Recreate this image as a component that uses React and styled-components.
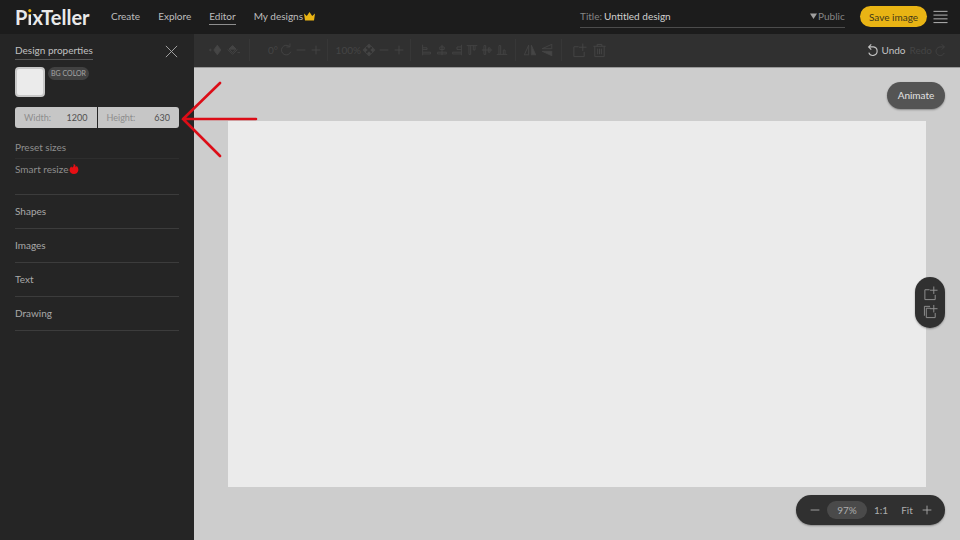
import React from "react";
import styled, { createGlobalStyle } from "styled-components";

const GlobalStyle = createGlobalStyle`
  * { box-sizing: border-box; }
  html, body, #root { height: 100%; }
  body {
    margin: 0;
    background: #cdcdcd;
    color: #bdbdbd;
    font: 10px/14px Lato, "Open Sans", sans-serif;
  }
  button, input, select { font: inherit; color: inherit; }
  button { border: 0; padding: 0; background: none; cursor: pointer; }
  a { color: inherit; text-decoration: none; }
`;

const Page = styled.div`
  position: relative;
  display: flex;
  flex-direction: column;
  min-height: 100vh;
`;

const Header = styled.header`
  display: flex;
  align-items: center;
  height: 34px;
  padding: 0 12px 1px 15px;
  background: #1c1c1c;
`;

const Logo = styled.a`
  flex: 0 0 96px;
  color: #e9e9e9;
  font-size: 20px;
  font-weight: 700;
  line-height: 26px;
`;

const LogoDot = styled.span`
  color: transparent;
  background: linear-gradient(#e9b411 40%, #e9e9e9 40%);
  background-clip: text;
`;

const Nav = styled.nav`
  display: flex;
  gap: 18px;
`;

const NavLink = styled.a`
  display: flex;
  align-items: center;
  gap: 1px;
  height: 17px;
  border-bottom: 1px solid ${(p) => (p.$active ? "#8d8d8d" : "transparent")};
`;

const TitleBar = styled.div`
  display: flex;
  align-items: center;
  flex: 0 1 265px;
  height: 22px;
  margin: 0 15px 0 auto;
  border-bottom: 1px solid #4c4c4c;
  color: #858585;
`;

const TitleLabel = styled.label`
  display: flex;
  flex: 1;
  gap: 2px;
`;

const TitleInput = styled.input`
  flex: 1;
  min-width: 0;
  padding: 0;
  border: 0;
  background: none;
  color: #d0d0d0;
`;

const Visibility = styled.div`
  display: flex;
  align-items: center;
  gap: 1px;
`;

const VisibilitySelect = styled.select`
  appearance: none;
  padding: 0;
  border: 0;
  background: none;
`;

const SaveButton = styled.button`
  width: 67px;
  height: 21px;
  margin-right: 6px;
  border-radius: 11px;
  background: #e9b414;
  color: #433819;
`;

const Body = styled.div`
  display: flex;
  flex: 1;
`;

const Sidebar = styled.aside`
  flex: 0 0 194px;
  padding: 8px 15px;
  background: #252525;
`;

const PanelHead = styled.div`
  display: flex;
  align-items: center;
  justify-content: space-between;
  height: 18px;
  color: #a8a8a8;
`;

const PanelTitle = styled.h2`
  height: 17px;
  margin: 0;
  border-bottom: 1px solid #585858;
  color: #c0c0c0;
  font-size: 10px;
  font-weight: 400;
  line-height: 14px;
`;

const IconButton = styled.button`
  display: grid;
  place-items: center;
  flex: 0 0 ${(p) => p.$w || 15}px;
  height: 16px;
`;

const ColorRow = styled.div`
  display: flex;
  align-items: flex-start;
  gap: 3px;
  margin-top: 7px;
`;

const Swatch = styled.button`
  width: 30px;
  height: 30px;
  border: 2px solid #c8c8c8;
  border-radius: 4px;
  background: #ebebeb;
`;

const ColorButton = styled.button`
  width: 41px;
  height: 13px;
  border-radius: 7px;
  background: #414141;
  color: #a5a5a5;
  font-size: 7px;
  line-height: 13px;
`;

const SizeFields = styled.div`
  display: flex;
  gap: 1px;
  margin: 10px 0 8px;
`;

const SizeField = styled.label`
  display: flex;
  align-items: center;
  flex: 1;
  height: 21px;
  padding: 0 9px;
  background: #c6c6c6;
  color: #8d8d8d;
  font-size: 9px;
  &:first-child { border-radius: 3px 0 0 3px; }
  &:last-child { border-radius: 0 3px 3px 0; }
`;

const SizeInput = styled.input`
  flex: 1;
  min-width: 0;
  width: 0;
  padding: 0;
  border: 0;
  background: none;
  color: #505050;
  font-size: 9px;
  text-align: right;
`;

const SubItem = styled.button`
  display: flex;
  align-items: center;
  gap: 1px;
  width: 100%;
  height: 22px;
  padding-bottom: 1px;
  color: #8e8e8e;
  & + & { border-top: 1px solid #2e2e2e; }
`;

const Sections = styled.div`
  margin-top: 14px;
  border-top: 1px solid #3c3c3c;
`;

const SectionButton = styled.button`
  display: block;
  width: 100%;
  height: 34px;
  padding-bottom: 1px;
  text-align: left;
  border-bottom: 1px solid #3c3c3c;
  color: #a9a9a9;
`;

const Main = styled.main`
  display: flex;
  flex-direction: column;
  flex: 1;
  min-width: 0;
`;

const Toolbar = styled.div`
  display: flex;
  align-items: center;
  height: 34px;
  padding: 0 13px 1px 0;
  border-bottom: 1px solid #999999;
  background: #303030;
  color: #454545;
`;

const ToolGroup = styled.div`
  display: flex;
  align-items: center;
  justify-content: flex-end;
  flex: 0 0 ${(p) => p.$w}px;
  height: 22px;
  padding-right: ${(p) => p.$end || 6}px;
  border-right: 1px solid ${(p) => (p.$last ? "transparent" : "#373737")};
`;

const History = styled.div`
  display: flex;
  gap: 4px;
  margin-left: auto;
`;

const HistoryButton = styled.button`
  display: flex;
  align-items: center;
  gap: 1px;
  color: ${(p) => (p.disabled ? "#444444" : "#c2c2c2")};
`;

const Workspace = styled.div`
  position: relative;
  flex: 1;
  padding: 53px 34px;
  background: #cdcdcd;
`;

const Artboard = styled.div`
  width: 100%;
  aspect-ratio: 1200 / 630;
  background: #ebebeb;
`;

const AnimateButton = styled.button`
  position: absolute;
  top: 14px;
  right: 15px;
  width: 58px;
  height: 27px;
  padding-bottom: 1px;
  border-radius: 14px;
  background: #545454;
  color: #e2e2e2;
  box-shadow: 0 1px 2px #0005;
`;

const PageTools = styled.div`
  position: absolute;
  top: 209px;
  right: 15px;
  display: flex;
  flex-direction: column;
  align-items: center;
  gap: 3px;
  width: 30px;
  padding: 9px 0;
  border-radius: 15px;
  background: #303030;
  color: #929292;
  box-shadow: 0 1px 2px #0005;
`;

const ZoomBar = styled.div`
  position: absolute;
  right: 15px;
  bottom: 15px;
  display: flex;
  align-items: center;
  width: 149px;
  height: 30px;
  padding: 0 11px;
  border-radius: 15px;
  background: #303030;
  color: #adadad;
  box-shadow: 0 1px 2px #0005;
`;

const ZoomValue = styled.button`
  width: 40px;
  height: 18px;
  margin-left: 5px;
  border-radius: 9px;
  background: #4a4a4a;
`;

const ZoomPreset = styled.button`
  flex: 0 0 ${(p) => p.$w}px;
  &:last-of-type { margin-left: auto; }
`;

const ZoomPresets = styled.div`
  display: flex;
  flex: 1;
`;

const Pointer = styled.svg`
  position: absolute;
  top: 80px;
  left: 181px;
  pointer-events: none;
`;

const shapes = {
  minus: <path d="M3 8h10" />,
  plus: <path d="M3 8h10M8 3v10" />,
  close: <path d="M2 2l12 12M14 2L2 14" />,
  menu: <path d="M.5 2.5h15M.5 6.5h15M.5 10.5h15M.5 14.5h15" />,
  rotate: <path d="M12 4A5.500 5.500 0 1 0 13.500 10M8.500 4.500h4v-4" />,
  undo: <path d="M3 4.500h5.500a4.900 4.900 0 1 1-5.300 6.500M6 1.500l-3 3 3 3" strokeWidth="1.300" />,
  redo: <path d="M13 4.500H8a4.900 4.900 0 1 0 4.800 7M10 1.500l3 3-3 3" />,
  front: <><path d="M0 8h3M1.5 6.5v3" /><path d="M9.5 2.500l4 5.500-4 5.500-4-5.500z" fill="currentColor" /></>,
  back: <><path d="M2 7.500l5.500 5.500L13 7.500M7.500 3l4 4-4 4-4-4z" /><path d="M7.500 3l4 4h-8zM13 11h3" fill="currentColor" /></>,
  opacity: <><path d="M8 1L15 8 8 15 1 8z" /><path d="M8 2l2 2-2 2-2-2zM4 6l2 2-2 2-2-2zM12 6l2 2-2 2-2-2zM8 10l2 2-2 2-2-2z" fill="currentColor" /></>,
  left: <path d="M3 2v12M3 5.500h5v2H3M3 10.500h9v2H3" />,
  center: <path d="M8 2v12M5.500 4.500h5v3h-5zM3 10.500h10v2H3z" />,
  right: <path d="M13 2v12M13 4.500H8v3h5M13 10.500H3v2h10" />,
  top: <path d="M2 3h12M4.500 3v10h2V3M9.500 3v5h2V3" />,
  middle: <path d="M2 8h12M4.500 3h2v10h-2zM9.500 5.500h2v5h-2z" />,
  bottom: <path d="M2 13h12M4.500 13V3h2v10M9.500 13V8h2v5" />,
  flipH: <><path d="M6.500 2.500v11h-5z" /><path d="M9.500 2.500v11h5z" fill="currentColor" /></>,
  flipV: <><path d="M2.500 6.500h11v-5z" /><path d="M2.500 9.500h11v5z" fill="currentColor" /></>,
  add: <path d="M7 4H2v10.500h11V9.500M11.500 .5v8M7.500 4.500h8" />,
  copy: <path d="M8 4.500H3.500v10h9.500V9.500M11.500 1v8M7.500 5h8M1.500 12.500v-10h6" />,
  trash: <path d="M1.500 3.500h13M5.500 3.500v-2h5v2M3 3.500v11h10v-11M6 6v6M8 6v6M10 6v6" />,
};

const Icon = ({ name, size = 14 }) => (
  <svg width={size} height={size} viewBox="0 0 16 16" fill="none" stroke="currentColor" strokeWidth="1" aria-hidden="true">
    {shapes[name]}
  </svg>
);

const Tool = ({ name, label, size, w }) => (
  <IconButton $w={w} aria-label={label}><Icon name={name} size={size} /></IconButton>
);

const Crown = () => (
  <svg width="11" height="9" viewBox="0 0 11 9" aria-hidden="true">
    <path d="M0 1.500L2.800 4 5.500 0 8.200 4 11 1.500 10 8.500H1z" fill="#e9b414" />
  </svg>
);

const Flame = () => (
  <svg width="10" height="10" viewBox="0 0 10 10" aria-hidden="true">
    <path d="M4.500 0C7 .8 6.700 2.800 6.500 3.300L7.800 2C9 3.300 9.600 5 9.300 6.500 8.800 9 7 10 5 10 2.300 10 .4 8.200.5 5.800.6 4.200 1.500 3 2.500 2.500L3 3.700C4.500 3 5 1.500 4.500 0z" fill="#e60f14" />
  </svg>
);

const Triangle = () => (
  <svg width="7" height="6" viewBox="0 0 7 6" aria-hidden="true">
    <path d="M0 .5h7L3.500 6z" fill="#a0a0a0" />
  </svg>
);

const alignments = ["left", "center", "right", "top", "middle", "bottom"];
const sections = ["Shapes", "Images", "Text", "Drawing"];

export default function App() {
  return (
    <Page>
      <GlobalStyle />
      <Header>
        <Logo href="#">P<LogoDot>i</LogoDot>xTeller</Logo>
        <Nav>
          <NavLink href="#">Create</NavLink>
          <NavLink href="#">Explore</NavLink>
          <NavLink href="#" $active>Editor</NavLink>
          <NavLink href="#">My designs<Crown /></NavLink>
        </Nav>
        <TitleBar>
          <TitleLabel>Title: <TitleInput defaultValue="Untitled design" /></TitleLabel>
          <Visibility>
            <Triangle />
            <VisibilitySelect aria-label="Visibility"><option>Public</option></VisibilitySelect>
          </Visibility>
        </TitleBar>
        <SaveButton>Save image</SaveButton>
        <Tool name="menu" label="Menu" size={15} />
      </Header>
      <Body>
        <Sidebar>
          <PanelHead>
            <PanelTitle>Design properties</PanelTitle>
            <Tool name="close" label="Close" size={15} />
          </PanelHead>
          <ColorRow>
            <Swatch aria-label="Background color" />
            <ColorButton>BG COLOR</ColorButton>
          </ColorRow>
          <SizeFields>
            <SizeField>Width: <SizeInput defaultValue="1200" /></SizeField>
            <SizeField>Height: <SizeInput defaultValue="630" /></SizeField>
          </SizeFields>
          <SubItem>Preset sizes</SubItem>
          <SubItem>Smart resize<Flame /></SubItem>
          <Sections>
            {sections.map((s) => <SectionButton key={s}>{s}</SectionButton>)}
          </Sections>
        </Sidebar>
        <Main>
          <Toolbar>
            <ToolGroup $w={56} $end={9}>
              <Tool name="front" label="Bring forward" w={18} />
              <Tool name="back" label="Send backward" />
            </ToolGroup>
            <ToolGroup $w={78} $end={4}>
              0°
              <Tool name="rotate" label="Rotate" />
              <Tool name="minus" label="Rotate less" />
              <Tool name="plus" label="Rotate more" />
            </ToolGroup>
            <ToolGroup $w={83} $end={4}>
              100%
              <Tool name="opacity" label="Opacity" />
              <Tool name="minus" label="Less opacity" />
              <Tool name="plus" label="More opacity" />
            </ToolGroup>
            <ToolGroup $w={105}>
              {alignments.map((a) => <Tool key={a} name={a} label={`Align ${a}`} />)}
            </ToolGroup>
            <ToolGroup $w={46}>
              <Tool name="flipH" label="Flip horizontally" w={17} />
              <Tool name="flipV" label="Flip vertically" w={17} />
            </ToolGroup>
            <ToolGroup $w={52} $end={4} $last>
              <Tool name="add" label="Duplicate" w={20} size={15} />
              <Tool name="trash" label="Delete" w={20} size={15} />
            </ToolGroup>
            <History>
              <HistoryButton><Icon name="undo" />Undo</HistoryButton>
              <HistoryButton disabled>Redo<Icon name="redo" /></HistoryButton>
            </History>
          </Toolbar>
          <Workspace>
            <Artboard />
            <AnimateButton>Animate</AnimateButton>
            <PageTools>
              <Tool name="add" label="Add page" size={15} />
              <Tool name="copy" label="Duplicate page" size={15} />
            </PageTools>
            <ZoomBar>
              <Tool name="minus" label="Zoom out" />
              <ZoomValue>97%</ZoomValue>
              <ZoomPresets>
                <ZoomPreset $w={28}>1:1</ZoomPreset>
                <ZoomPreset $w={24}>Fit</ZoomPreset>
              </ZoomPresets>
              <Tool name="plus" label="Zoom in" />
            </ZoomBar>
          </Workspace>
        </Main>
      </Body>
      <Pointer width="78" height="78" viewBox="0 0 78 78" fill="none" stroke="#dc0d17" strokeWidth="2.600" strokeLinecap="round" aria-hidden="true">
        <path d="M75 39H2M39 3L2 39l37 37" />
      </Pointer>
    </Page>
  );
}
